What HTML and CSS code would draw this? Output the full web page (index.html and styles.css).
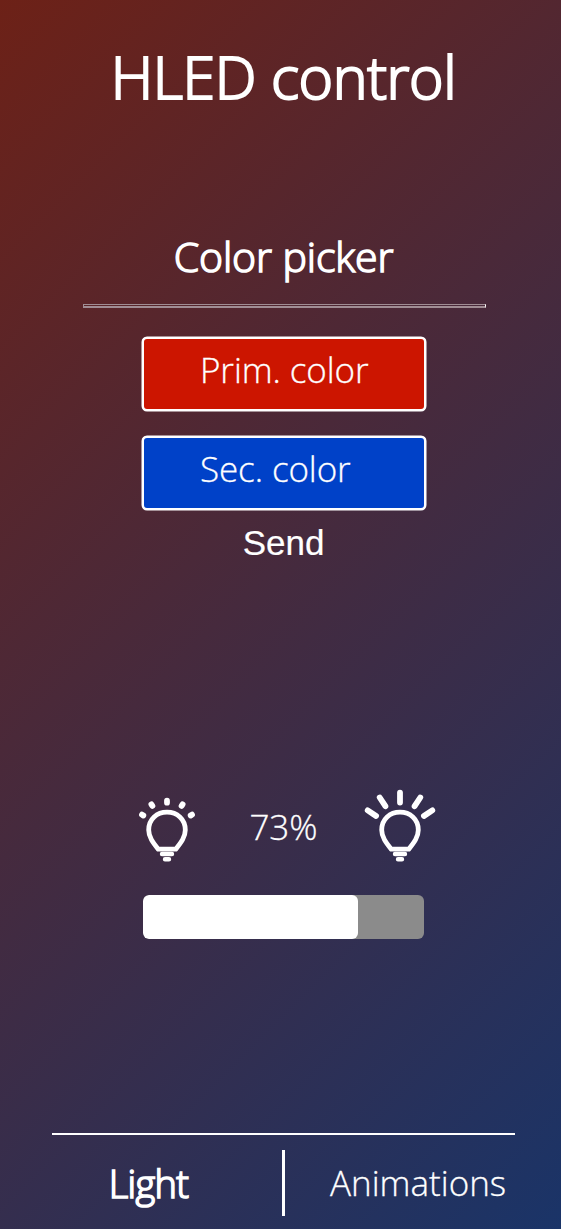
FILE: index.html
```html
<!DOCTYPE html>
<html lang="en">
<head>
<meta charset="utf-8">
<title>HLED control</title>
<link rel="stylesheet" href="styles.css">
</head>
<body>
<header><h1 class="title"><span>HLED control</span></h1></header>
<main>
  <section class="picker">
    <h2 class="subtitle"><span>Color picker</span></h2>
    <hr class="rule">
    <div class="swatch primary"><span>Prim. color</span></div>
    <div class="swatch secondary"><span>Sec. color</span></div>
    <button class="send">Send</button>
  </section>
  <section class="brightness">
    <div class="levels">
      <svg class="bulb" viewBox="0 0 72 74" fill="none" stroke="#fff" stroke-linecap="round">
        <path d="M25.2 60.2C20.5 54.2 15.7 48.5 15.7 41C15.7 30 24 23.2 34 23.2S52.3 30 52.3 41C52.3 48.5 47.5 54.2 42.8 60.2Z" stroke-width="4.8" stroke-linejoin="round"/>
        <path d="M29 65H39M32 70.3H36" stroke-width="4.4"/>
        <path d="M34 11.7v2M18.4 15.4l1 1.5M49.6 15.4l-1 1.5M9 25.6l1.3 .9M59 25.6l-1.3 .9" stroke-width="5.8"/>
      </svg>
      <span class="percent">73%</span>
      <svg class="bulb" viewBox="0 0 72 74" fill="none" stroke="#fff" stroke-linecap="round">
        <path d="M27.2 60.2C22.5 54.2 17.7 48.5 17.7 41C17.7 30 26 23.2 36 23.2S54.3 30 54.3 41C54.3 48.5 49.5 54.2 44.8 60.2Z" stroke-width="4.8" stroke-linejoin="round"/>
        <path d="M31 65H41M34 70.3H38" stroke-width="4.4"/>
        <path d="M36 3.6v10M15.7 8.5l5.7 8.7M56.3 8.5l-5.7 8.7M3.7 21.4l8.4 5.6M68.3 21.4l-8.4 5.6" stroke-width="5.8"/>
      </svg>
    </div>
    <div class="slider"><div class="fill"></div></div>
  </section>
</main>
<nav class="tabs">
  <a class="tab active"><span>Light</span></a>
  <a class="tab"><span>Animations</span></a>
</nav>
</body>
</html>
```
FILE: styles.css
```css
* { box-sizing: border-box; }
body {
  margin: 0;
  width: 561px;
  height: 1229px;
  display: flex;
  flex-direction: column;
  overflow: hidden;
  color: #fff;
  font: 300 35px/50px "Open Sans", sans-serif;
  -webkit-text-stroke: .3px #fff;
  background: linear-gradient(135deg, #6d2117, #1a3468);
}
h1, h2 { margin: 0; text-align: center; font-weight: 300; }
.title {
  padding: 33px 0 0 6px;
  height: 229px;
  font-size: 59px;
  line-height: 86px;
  letter-spacing: -.4px;
  -webkit-text-stroke: 2.1px #fff;
}
.picker {
  height: 553px;
  display: flex;
  flex-direction: column;
  align-items: center;
  padding-left: 7px;
}
.subtitle {
  height: 75px;
  font-size: 41px;
  line-height: 54px;
  letter-spacing: -.1px;
  margin-right: 1px;
  -webkit-text-stroke: 1.5px #fff;
}
.rule {
  width: 403px;
  height: 4px;
  margin: 0 0 29px;
  border: 1px solid #a08d94;
  border-bottom-width: 2px;
  border-right-color: #fff;
}
.swatch {
  width: 284px;
  height: 74px;
  margin-bottom: 24.5px;
  padding: 6px 0 0 56px;
  border: 2px solid #fff;
  border-radius: 5px;
  letter-spacing: -.1px;
  box-shadow: 0 0 0 .5px #fff;
}
.primary { background: #cc1500; }
.secondary { background: #0041c8; }
.send {
  margin-top: -11px;
  margin-right: 1px;
  padding: 0;
  border: 0;
  background: none;
  color: #fff;
  font: 35px/40px "Liberation Sans", Arial, sans-serif;
  -webkit-text-stroke: .2px #fff;
}
.brightness { padding-left: 133px; }
.levels {
  display: flex;
  align-items: center;
  justify-content: space-between;
  height: 86px;
  width: 303px;
  margin-top: 7px;
  padding-bottom: 12px;
}
.bulb { width: 72px; height: 74px; }
.percent { padding: 2px 2px 0 0; }
.slider {
  width: 281px;
  height: 44px;
  margin: 20px 0 0 10px;
  overflow: hidden;
  border-radius: 6px;
  background: #8b8b8b;
}
.fill { width: 215px; height: 100%; border-radius: 6px; background: #fff; }
.tabs {
  display: flex;
  height: 96px;
  width: 463px;
  margin: auto 0 0 52px;
  border-top: 2px solid #fff;
}
.tab { padding-top: 23px; text-align: center; white-space: nowrap; }
.active {
  width: 233px;
  height: 66px;
  margin-top: 15px;
  padding: 8px 37px 0 0;
  border-right: 3px solid #fff;
  font-size: 38px;
  letter-spacing: -.7px;
  -webkit-text-stroke: 1.6px #fff;
}
.tab:last-child { padding-left: 45px; }
```
